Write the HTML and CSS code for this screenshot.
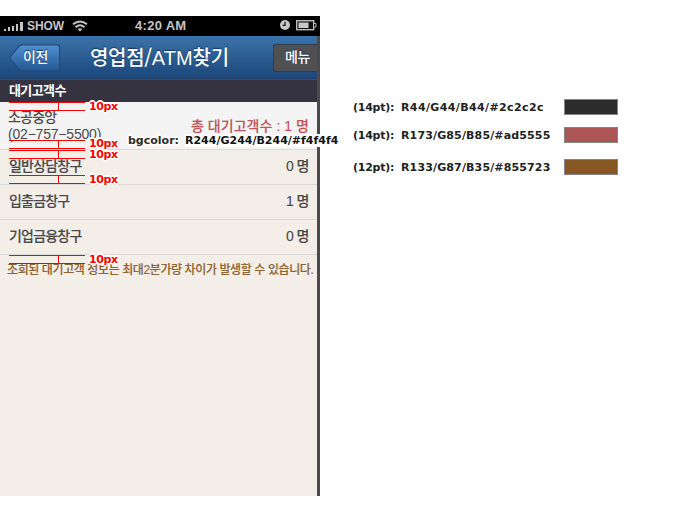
FILE: index.html
```html
<!DOCTYPE html>
<html lang="ko">
<head>
<meta charset="utf-8">
<title>영업점/ATM찾기</title>
<link rel="stylesheet" href="styles.css">
</head>
<body>
<main class="board">
  <section class="phone">
    <header class="status">
      <svg class="signal" width="20" height="9" viewBox="0 0 20 9"><path d="M0 7h2v2H0zM4 5h2v4H4zM8 4h2v5H8zM12 2h2v7h-2zM16 0h3v9h-3z"/></svg>
      <span class="carrier">SHOW</span>
      <svg class="wifi" width="16" height="12" viewBox="0 0 16 12"><path d="M1 4.2Q8-1.4 15 4.2M3.5 7.2Q8 3.5 12.5 7.2" fill="none" stroke="#c4c4c4" stroke-width="1.9"/><path d="M5.6 9.1Q8 7.2 10.4 9.1L8 11.6z" fill="#c4c4c4"/></svg>
      <span class="time">4:20 AM</span>
      <svg class="clock" width="10" height="10" viewBox="0 0 10 10"><circle cx="5" cy="5" r="5" fill="#c8c8c8"/><path d="M5 1.8V5.3H2.5" fill="none" stroke="#111" stroke-width="1.2"/></svg>
      <svg class="battery" width="21" height="11" viewBox="0 0 21 11"><rect x=".7" y=".7" width="17" height="9" fill="#111" stroke="#bbb" stroke-width="1.4"/><path d="M2.5 2.5h10v5.5h-10z" fill="#c8c8c8"/><path d="M18 3.5h2v3.5h-2" fill="#111" stroke="#bbb"/></svg>
    </header>
    <nav class="nav">
      <div class="back">
        <svg width="52" height="28" viewBox="0 0 52 28"><defs><linearGradient id="b" x2="0" y2="1"><stop stop-color="#5291d3"/><stop offset="1" stop-color="#245793"/></linearGradient></defs><path d="M13 .8H48Q50.5 .8 50.5 3.5V24Q50.5 26.6 48 26.6H13Q11 26.6 9.5 24.5L1.5 15Q.6 13.7 1.5 12.5L9.5 3Q11 .8 13 .8Z" fill="url(#b)" stroke="#244c7d" stroke-width="1.2"/></svg>
        <span>이전</span>
      </div>
      <h1>영업점/<span class="latin">ATM</span>찾기</h1>
      <div class="menu">메뉴</div>
    </nav>
    <h2 class="section">대기고객수</h2>
    <div class="content">
      <div class="row summary"><div class="branch">소공중앙<br><span class="phone-no">(02−757−5500)</span></div><div class="total">총 대기고객수 : 1 명</div></div>
      <div class="row"><span>일반상담창구</span><span class="count">0 명</span></div>
      <div class="row"><span>입출금창구</span><span class="count">1 명</span></div>
      <div class="row"><span>기업금융창구</span><span class="count">0 명</span></div>
      <p class="notice">조회된 대기고객 정보는 최대2분가량 차이가 발생할 수 있습니다.</p>
    </div>
  </section>
  <aside class="legend">
    <div class="spec"><span class="pt">(14pt):</span><span class="rgb text">R44/G44/B44/#2c2c2c</span><i class="swatch dark"></i></div>
    <div class="spec"><span class="pt">(14pt):</span><span class="rgb">R173/G85/B85/#ad5555</span><i class="swatch red"></i></div>
    <div class="spec"><span class="pt">(12pt):</span><span class="rgb">R133/G87/B35/#855723</span><i class="swatch brown"></i></div>
  </aside>
  <div class="gauge g1"><span>10px</span></div>
  <div class="gauge g2"><span>10px</span></div>
  <div class="gauge g3"><span>10px</span></div>
  <div class="gauge g4"><span>10px</span></div>
  <div class="gauge g5"><span>10px</span></div>
  <div class="bgnote"><span class="key">bgcolor:</span><span class="value">R244/G244/B244/#f4f4f4</span></div>
</main>
</body>
</html>
```

FILE: styles.css
```css
* { box-sizing: border-box; }
body { margin: 0; background: #fff; font-family: "Liberation Sans", "Noto Sans CJK KR", sans-serif; }
.board { position: relative; width: 700px; height: 517px; padding-top: 16px; display: flex; align-items: flex-start; overflow: hidden; }
.phone { width: 320px; height: 480px; display: flex; flex-direction: column; background: #4a494c; white-space: nowrap; }

.status { height: 20px; background: #000; color: #c4c4c4; display: flex; align-items: center; padding: 0 3px 0 4px; font-size: 13px; font-weight: bold; line-height: 20px; }
.signal { fill: #c4c4c4; }
.carrier { width: 37px; margin-left: 3px; font-size: 12px; letter-spacing: -0.1px; }
.wifi { margin-left: 8px; }
.time { margin-left: 47px; width: 53px; letter-spacing: 0.3px; }
.clock { margin-left: auto; margin-top: -2px; }
.battery { margin-left: 6px; margin-top: -2px; }

.nav { width: 317px; height: 44px; display: flex; align-items: center; color: #fff; background: linear-gradient(#3c73aa, #1b4679); border-bottom: 1px solid #3b4b67; text-shadow: 0 -1px 1px #17395f; }
.back { width: 52px; height: 28px; margin-left: 9px; display: grid; }
.back svg, .back span { grid-area: 1 / 1; }
.back span { padding-left: 14px; font-size: 14px; font-weight: 500; line-height: 27px; letter-spacing: -0.3px; }
.nav h1 { width: 142px; margin: 0 0 0 29px; font: 500 20px/42px "Noto Sans CJK KR", sans-serif; letter-spacing: -0.3px; }
.nav .latin { font-family: "Liberation Sans", sans-serif; font-weight: 400; letter-spacing: 0; }
.menu { width: 44px; height: 28px; margin-left: auto; padding-left: 11px; background: #505052; border: 1px solid #333c49; border-right: 0; border-radius: 3px 0 0 3px; font-size: 14px; font-weight: 500; line-height: 25px; letter-spacing: -0.5px; }

.section { height: 22px; width: 317px; margin: 0; padding-left: 9px; background: #35333f; color: #fff; font-size: 13px; font-weight: bold; line-height: 22px; letter-spacing: -0.6px; }
.content { width: 317px; flex: 1; background: #f3eee8; color: #4c4a49; font: 500 14px/17px "Liberation Sans", "Noto Sans CJK KR", sans-serif; -webkit-text-stroke: 0.12px; }
.row { height: 35px; padding: 0 8px 1px 9px; display: flex; align-items: center; justify-content: space-between; border-bottom: 1px solid #dadadd; letter-spacing: -0.8px; }
.summary { height: 48px; padding-bottom: 0; background: #f4f4f4; }
.branch { margin-left: -1px; -webkit-text-stroke: 0; }
.phone-no { letter-spacing: -0.2px; }
.total { padding-top: 2px; color: #c0565b; letter-spacing: 0.05px; }
.count { letter-spacing: -0.5px; }
.notice { margin: 7px 0 0 7px; color: #8f622f; font-size: 12px; line-height: 17px; letter-spacing: -0.4px; }

.legend { margin-left: 33px; padding-top: 83px; color: #222; font: bold 11px/16px "DejaVu Sans", sans-serif; }
.spec { display: flex; align-items: center; height: 16px; width: 265px; white-space: nowrap; }
.spec + .spec { margin-top: 12px; }
.spec:last-child { margin-top: 16px; }
.pt, .rgb { padding-top: 2px; }
.pt { width: 48px; letter-spacing: -0.25px; }
.rgb { letter-spacing: 0.14px; }
.rgb.text { letter-spacing: 0.38px; }
.swatch { width: 54px; height: 16px; margin-left: auto; border: 1px solid #858585; }
.dark { background: #2c2c2c; }
.red { background: #ad5555; }
.brown { background: #855723; }

/* Spacing callouts drawn over the screen. */
.gauge { position: absolute; left: 9px; width: 76px; height: 9px; border: 0 solid #f00; border-width: 1px 0; }
.gauge::before { content: ""; position: absolute; left: 49px; top: 0; width: 1px; height: 7px; background: #f00; }
.gauge span { position: absolute; left: 80px; top: -2px; color: #f00; font: bold 11px/12px "DejaVu Sans", sans-serif; letter-spacing: -0.4px; }
.g2 span { top: -3px; }
.gauge span, .bgnote { text-shadow: -2px 0 #fff, 2px 0 #fff, 0 -2px #fff, 0 2px #fff, -1px -1px #fff, 1px 1px #fff, -1px 1px #fff, 1px -1px #fff; }
.g1 { top: 102px; }
.g2 { top: 140px; }
.g3 { top: 150px; }
.g4 { top: 175px; }
.g5 { top: 255px; }
.bgnote { position: absolute; left: 128px; top: 134px; display: flex; color: #111; font: bold 11px/13px "DejaVu Sans", sans-serif; white-space: nowrap; }
.key { width: 57px; color: #2c2c2c; }
.value { background: #fff; }
```
